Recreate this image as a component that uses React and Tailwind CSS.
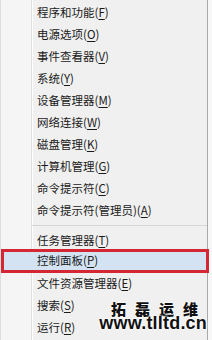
const topItems = [
  ["程序和功能", "F"],
  ["电源选项", "O"],
  ["事件查看器", "V"],
  ["系统", "Y"],
  ["设备管理器", "M"],
  ["网络连接", "W"],
  ["磁盘管理", "K"],
  ["计算机管理", "G"],
  ["命令提示符", "C"],
  ["命令提示符(管理员)", "A"],
];

const bottomItems = [
  ["任务管理器", "T"],
  ["控制面板", "P", true],
  ["文件资源管理器", "E"],
  ["搜索", "S"],
  ["运行", "R"],
];

function Label({ text, hotkey }) {
  return (
    <span>
      {text}(<span className="underline underline-offset-[2px]">{hotkey}</span>)
    </span>
  );
}

function MenuRow({ text, hotkey, active }) {
  if (active) {
    return (
      <div className="-mt-[3px] -mr-[2px] flex h-[24px] items-center border-[3px] border-[#d42633] bg-[#d4e3f3] pl-[33px]">
        <Label text={text} hotkey={hotkey} />
      </div>
    );
  }
  return (
    <div className="flex h-[22px] items-center pl-[36px]">
      <Label text={text} hotkey={hotkey} />
    </div>
  );
}

export default function App() {
  return (
    <div className="relative flex h-[340px] w-[212px] overflow-hidden bg-[#f7f7f7] font-['Noto_Sans_CJK_SC',sans-serif] text-[11.5px] leading-none text-[#1a1a1a]">
      <div className="flex h-full w-[208px] flex-col border-r border-l border-r-[#a9a9a9] border-l-[#dedede] bg-[linear-gradient(to_right,#f5f5f5_0_30px,#e0e0e0_30px_31px,#ffffff_31px_32px,#f0f0f0_32px)] pt-[2px]">
        {topItems.map(([text, hotkey]) => (
          <MenuRow key={text} text={text} hotkey={hotkey} />
        ))}
        <div className="mt-[3px] mb-[4px] ml-[31px] h-px bg-[#d6d6d6]" />
        {bottomItems.map(([text, hotkey, active]) => (
          <MenuRow key={text} text={text} hotkey={hotkey} active={active} />
        ))}
      </div>

      <div className="absolute right-[5px] bottom-[9px] flex flex-col items-end font-black text-[#111] [text-shadow:0_0_2px_#fff,0_0_2px_#fff,0_0_3px_#fff]">
        <div className="font-['Noto_Sans_CJK_SC',sans-serif] text-[15px] leading-[15px] tracking-[9px]">拓磊运维</div>
        <div className="font-['Liberation_Sans',sans-serif] text-[18px] leading-[15px] tracking-[0.2px]">www.tlltd.cn</div>
      </div>
    </div>
  );
}
